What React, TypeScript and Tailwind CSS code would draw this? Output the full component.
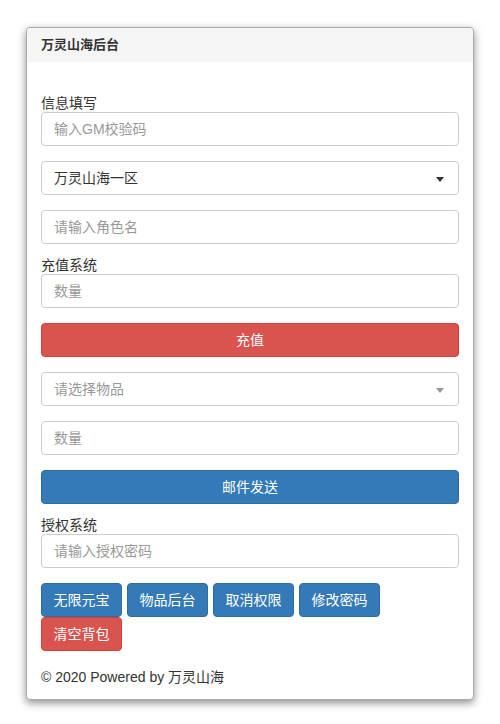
import React from "react";

const font = "font-['Liberation_Sans','Noto_Sans_CJK_SC',sans-serif]";

function Field({ placeholder }: { placeholder: string }) {
    return (
        <input
            className="block w-full h-[34px] px-3 text-sm text-[#555] placeholder:text-[#999] border border-[#ccc] rounded bg-white focus:outline-none"
            placeholder={placeholder}
        />
    );
}

function Select({ value, muted }: { value: string; muted?: boolean }) {
    return (
        <div className="relative h-[34px] w-full border border-[#ccc] rounded bg-white flex items-center px-3">
            <span className={muted ? "text-sm text-[#999]" : "text-sm text-[#333]"}>{value}</span>
            <span
                className={
                    muted
                        ? "absolute right-[14px] top-[15px] w-0 h-0 border-x-[4px] border-x-transparent border-t-[5px] border-t-[#999]"
                        : "absolute right-[14px] top-[15px] w-0 h-0 border-x-[4px] border-x-transparent border-t-[5px] border-t-[#333]"
                }
            />
        </div>
    );
}

function Btn({ children, red }: { children: React.ReactNode; red?: boolean }) {
    return (
        <button
            className={
                red
                    ? "w-[81px] h-[34px] text-sm text-white bg-[#d9534f] border border-[#d43f3a] rounded"
                    : "w-[81px] h-[34px] text-sm text-white bg-[#337ab7] border border-[#2e6da4] rounded"
            }
        >
            {children}
        </button>
    );
}

export default function App() {
    return (
        <div className={`${font} bg-white min-h-[724px] pt-[27px] px-[26px]`}>
            <div className="border border-[#aaa] rounded bg-white shadow-[0_3px_8px_rgba(0,0,0,0.45)] h-[673px]">
                <div className="h-[34px] bg-[#f5f5f5] rounded-t flex items-center px-[14px]">
                    <span className="text-[13px] font-bold text-[#333]">万灵山海后台</span>
                </div>
                <div className="px-[14px] pt-[32px] text-sm text-[#333]">
                    <label className="block leading-[18px]">信息填写</label>
                    <Field placeholder="输入GM校验码" />
                    <div className="mt-[15px]">
                        <Select value="万灵山海一区" />
                    </div>
                    <div className="mt-[15px]">
                        <Field placeholder="请输入角色名" />
                    </div>
                    <label className="block mt-[12px] leading-[18px]">充值系统</label>
                    <Field placeholder="数量" />
                    <button className="mt-[15px] w-full h-[34px] text-sm text-white bg-[#d9534f] border border-[#d43f3a] rounded">
                        充值
                    </button>
                    <div className="mt-[15px]">
                        <Select value="请选择物品" muted />
                    </div>
                    <div className="mt-[15px]">
                        <Field placeholder="数量" />
                    </div>
                    <button className="mt-[15px] w-full h-[34px] text-sm text-white bg-[#337ab7] border border-[#2e6da4] rounded">
                        邮件发送
                    </button>
                    <label className="block mt-[12px] leading-[18px]">授权系统</label>
                    <Field placeholder="请输入授权密码" />
                    <div className="mt-[15px] flex flex-wrap gap-x-[5px] w-[350px]">
                        <Btn>无限元宝</Btn>
                        <Btn>物品后台</Btn>
                        <Btn>取消权限</Btn>
                        <Btn>修改密码</Btn>
                        <Btn red>清空背包</Btn>
                    </div>
                    <p className="mt-[16px] leading-5">© 2020 Powered by 万灵山海</p>
                </div>
            </div>
        </div>
    );
}
